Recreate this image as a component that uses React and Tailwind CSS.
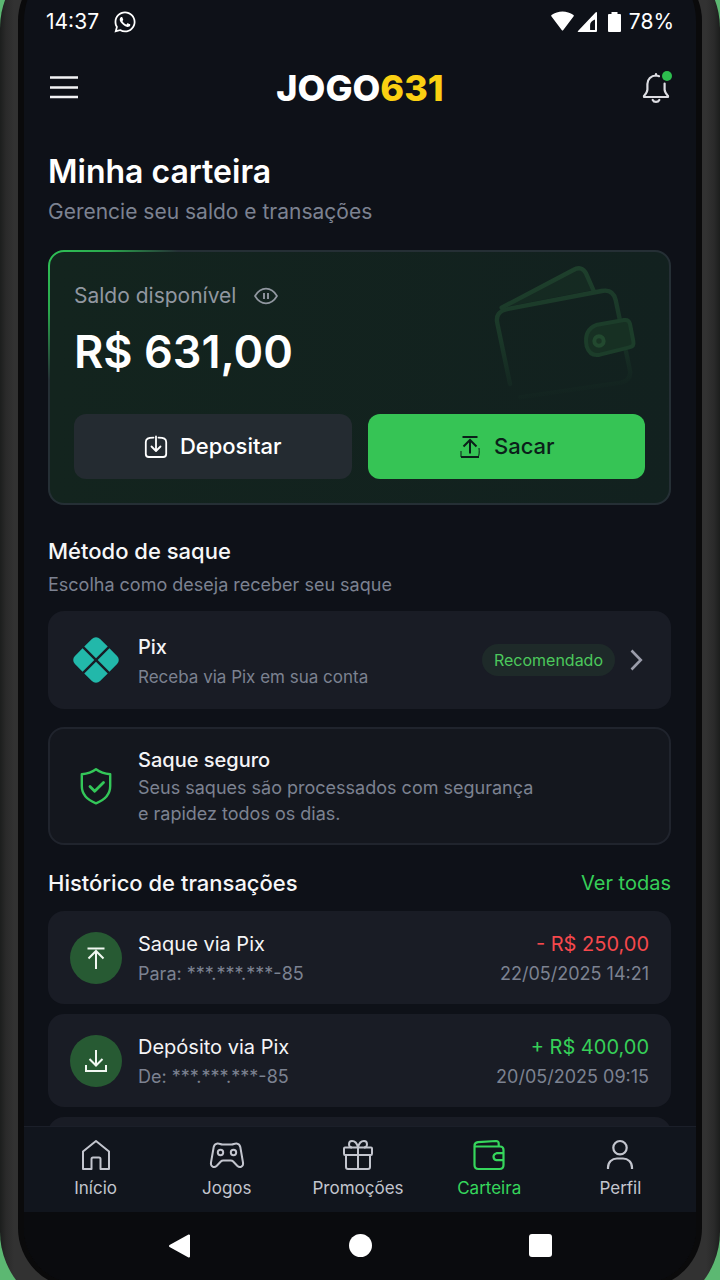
import { useState } from "react"
import { FaWhatsapp } from "react-icons/fa"

const MenuIcon = () => (
  <svg className="w-8 h-8" viewBox="0 0 32 32" fill="none" stroke="currentColor" strokeWidth="2.4">
    <path d="M2 5.500h28M2 15.500h28M2 25h28" />
  </svg>
)

const BellIcon = () => (
  <svg className="w-8 h-8" viewBox="0 0 32 32" fill="none" stroke="currentColor" strokeWidth="2.2" strokeLinecap="round" strokeLinejoin="round">
    <path d="M19 4.200C18 3.700 17 3.500 16 3.500c-5 0-8.600 3.600-8.600 8.500v5.500c0 2.500-1.400 4-3.400 6.500v1h24v-1c-2-2.500-3.400-4-3.400-6.500v-6" />
    <path d="M16 3.500V2M12.700 28c.6 1.200 1.800 1.900 3.300 1.900s2.700-.7 3.300-1.900" />
  </svg>
)

const SignalIcons = () => (
  <svg className="w-[71px] h-6" viewBox="0 0 71 24" fill="currentColor">
    <path d="M1.500 6.500C1 6 1 5.500 1.500 5C8 .3 17 .3 23.500 5c.5.500.5 1 0 1.500L13.300 20c-.5.700-1.100.7-1.600 0Z" />
    <path fillRule="evenodd" d="M47 3v18q0 1-1 1H28.500q-1.500 0-.5-1L45.500 2.500Q47 1.500 47 3ZM45 9.500c-3 1-4.900 3-4.900 5.600v4.900H45Z" />
    <path d="M61.500 2h6v2H70a1 1 0 0 1 1 1v16a1 1 0 0 1-1 1H59a1 1 0 0 1-1-1V5a1 1 0 0 1 1-1h2.500Z" />
  </svg>
)

const EyeIcon = () => (
  <svg className="w-6 h-6" viewBox="0 0 24 24" fill="none" stroke="currentColor" strokeWidth="1.700" strokeLinejoin="round">
    <path d="M1 12C4 7 7.500 4.700 12 4.700S20 7 23 12c-3 5-6.500 7.300-11 7.300S4 17 1 12Z" />
    <path d="M10 9v6M14 9v6" strokeWidth="1.900" />
  </svg>
)

const DepositIcon = () => (
  <svg className="w-6 h-6" viewBox="0 0 24 24" fill="none" stroke="currentColor" strokeWidth="1.800" strokeLinecap="round" strokeLinejoin="round">
    <path d="M9.500 2.600C4 2.800 1.800 3.600 1.800 7v12c0 2 1 3 3 3h14.400c2 0 3-1 3-3V7c0-3.400-2.200-4.200-7.700-4.400" />
    <path d="M12 1.500v14M7.500 11.500l4.500 4.500 4.500-4.500" />
  </svg>
)

const WithdrawIcon = () => (
  <svg className="w-6 h-6" viewBox="0 0 24 24" fill="none" stroke="currentColor" strokeWidth="2">
    <path d="M4.500 2h15M12 18.500V5M5.500 11.500 12 5l6.500 6.500M3 22h18" />
    <path d="M3 16v6M21 13c.4 4 .2 6.500-.6 9" strokeWidth="1" />
  </svg>
)

const PixIcon = () => (
  <svg className="w-[46px] h-[46px]" viewBox="0 0 46 46" fill="#22b8aa">
    <g transform="rotate(45 23 23)">
      <path d="M11 5.200h10.800v16.600H5.200V11a5.800 5.800 0 0 1 5.800-5.800Z" />
      <path d="M24.200 5.200H35a5.800 5.800 0 0 1 5.800 5.800v10.800H24.200Z" />
      <path d="M5.200 24.200h16.600v16.600H11A5.800 5.800 0 0 1 5.200 35Z" />
      <path d="M24.200 24.200h16.600V35a5.800 5.800 0 0 1-5.800 5.800H24.200Z" />
    </g>
  </svg>
)

const ShieldIcon = () => (
  <svg className="w-10 h-10" viewBox="0 0 40 40" fill="none" stroke="#34c759" strokeWidth="2.400" strokeLinecap="round" strokeLinejoin="round">
    <path d="M20 3.200c-4 3-8.500 4.500-14.200 5V20c0 8 5.200 13.800 14.200 17.300C29 33.800 34.200 28 34.200 20V8.200C28.500 7.700 24 6.200 20 3.200Z" />
    <path d="m14 20.500 4.700 4.800 8.800-8.800" strokeWidth="2.800" />
  </svg>
)

const ChevronIcon = () => (
  <svg className="w-6 h-6" viewBox="0 0 24 24" fill="none" stroke="#9a9caa" strokeWidth="2.600">
    <path d="m6.500 2.500 9.300 9.500-9.300 9.500" />
  </svg>
)

const ArrowUpBarIcon = () => (
  <svg className="w-6 h-6" viewBox="0 0 24 24" fill="none" stroke="#f1f8f2" strokeWidth="2">
    <path d="M3.500 2.500h17M12 23V5M4.500 12.500 12 5l7.500 7.500" />
  </svg>
)

const ArrowDownTrayIcon = () => (
  <svg className="w-6 h-6" viewBox="0 0 24 24" fill="none" stroke="#f1f8f2" strokeWidth="2">
    <path d="M12 1v15M5.500 10 12 16.500 18.500 10M2 16v6h20v-6" />
  </svg>
)

const WalletArt = () => (
  <svg className="w-[150px] h-[140px]" viewBox="270 60 450 420" fill="none" strokeLinecap="round" strokeLinejoin="round">
    <defs>
      <linearGradient id="fade" gradientUnits="userSpaceOnUse" x1="470" y1="80" x2="520" y2="470">
        <stop offset="0" stopColor="#1e402c" />
        <stop offset="0.500" stopColor="#1a3728" />
        <stop offset="1" stopColor="#1a3728" stopOpacity="0" />
      </linearGradient>
    </defs>
    <g stroke="url(#fade)" strokeWidth="13">
      <path d="M305 203 520 90q25-14 38 10l22 50" fill="#1e402c" fillOpacity="0.300" />
      <path d="M330 432 292 250q-8-35 32-43L605 153q34-7 42 27l12 57M678 335l12 57q4 28-26 36L360 472" />
    </g>
    <g stroke="#1c3d2a" strokeWidth="12">
      <path d="M592 254 672 240q15-2 18 12l10 52q3 15-12 18l-88 22q-30 6-40-25-10-50 32-65Z" fill="#173023" />
      <circle cx="597" cy="303" r="14" fill="#193424" stroke="#22492f" />
    </g>
  </svg>
)

const HomeIcon = () => (
  <svg className="w-8 h-8" viewBox="0 0 32 32" fill="none" stroke="currentColor" strokeWidth="2" strokeLinejoin="round">
    <path d="M3 12.500 16 2l13 10.500V30h-8.500V20q0-1.500-1.500-1.500h-6q-1.500 0-1.500 1.500v10H3Z" />
  </svg>
)

const GamepadIcon = () => (
  <svg className="w-9 h-8" viewBox="0 0 36 32" fill="none" stroke="currentColor" strokeWidth="2" strokeLinejoin="round">
    <path d="M8.500 4.500q-3 .3-3.800 3.500L2 23.500c-.7 4 3 5.800 5.800 3.200l4-4.200q1-1 2.400-1h7.600q1.400 0 2.400 1l4 4.200c2.800 2.600 6.500.8 5.800-3.200L31.300 8q-.8-3.200-3.800-3.500c-2-.2-3 1-5 1h-9c-2 0-3-1.200-5-1Z" />
    <circle cx="11.500" cy="13.500" r="2.700" />
    <circle cx="24.500" cy="13.500" r="2.700" />
  </svg>
)

const GiftIcon = () => (
  <svg className="w-8 h-8" viewBox="0 0 32 32" fill="none" stroke="currentColor" strokeWidth="2" strokeLinejoin="round">
    <path d="M3 8.500h26q1 0 1 1v5q0 1.500-1 1.500H3q-1 0-1-1.500v-5q0-1 1-1ZM4 16v12q0 2 2 2h20q2 0 2-2V16M16 8.500V30" />
    <path d="M16 8.500C15 4 12.500 2 10 2 6 2 6 8.500 10 8.500M16 8.500C17 4 19.500 2 22 2c4 0 4 6.500 0 6.500" />
  </svg>
)

const WalletIcon = () => (
  <svg className="w-8 h-8" viewBox="0 0 32 32" fill="none" stroke="currentColor" strokeWidth="2.200" strokeLinejoin="round">
    <path d="M1.500 7V26q0 4 4 4h21q4 0 4-4V11q0-3.500-3.500-3.500H3q-1.500 0-1.500-1C1.500 4 3 3.500 5 3.200L23 2q2.700 0 2.700 2.500v3" />
    <path d="M30.500 14.200h-7q-3 .8-3 3.500t3 3.500h7" />
  </svg>
)

const ProfileIcon = () => (
  <svg className="w-8 h-8" viewBox="0 0 32 32" fill="none" stroke="currentColor" strokeWidth="2.200">
    <circle cx="16" cy="8.700" r="6.700" />
    <path d="M4 30v-1.500C4 23 8 19.500 13 19.500h6c5 0 9 3.500 9 9V30" />
  </svg>
)

const navItems = [
  { icon: HomeIcon, label: "Início" },
  { icon: GamepadIcon, label: "Jogos" },
  { icon: GiftIcon, label: "Promoções" },
  { icon: WalletIcon, label: "Carteira" },
  { icon: ProfileIcon, label: "Perfil" },
]

const transactions = [
  {
    id: 1,
    type: "out",
    title: "Saque via Pix",
    detail: "Para: ***.***.***-85",
    amount: "- R$ 250,00",
    date: "22/05/2025 14:21",
  },
  {
    id: 2,
    type: "in",
    title: "Depósito via Pix",
    detail: "De: ***.***.***-85",
    amount: "+ R$ 400,00",
    date: "20/05/2025 09:15",
  },
]

const StatusBar = () => (
  <div className="flex h-11 shrink-0 items-center justify-between px-[22px] text-[21px] text-white">
    <div className="flex items-center gap-[14px]">
      <span>14:37</span>
      <FaWhatsapp className="w-6 h-6" />
    </div>
    <div className="flex items-center gap-2">
      <SignalIcons />
      <span>78%</span>
    </div>
  </div>
)

const Header = () => (
  <header className="flex h-[88px] shrink-0 items-center justify-between px-6">
    <button type="button" aria-label="Menu" className="text-[#f3f3f5]">
      <MenuIcon />
    </button>
    <div className="text-[36px] leading-10 font-extrabold text-white">
      JOGO<span className="text-[#fbd012]">631</span>
    </div>
    <button type="button" aria-label="Notificações" className="relative text-[#dcdde2]">
      <BellIcon />
      <span className="absolute -top-px right-0 h-[10px] w-[10px] rounded-full bg-[#2dbd4e]" />
    </button>
  </header>
)

const BalanceCard = () => (
  <section className="mt-[22px] rounded-2xl bg-[radial-gradient(circle_at_top_left,#2fc257_0,#2aa94d_60px,#252f35_130px)] p-[2px]">
    <div className="relative rounded-[14px] bg-linear-to-r from-[#13241e] to-[#12211f] px-6 pt-7 pb-6">
      <div className="absolute top-2 right-[29px]">
        <WalletArt />
      </div>
      <div className="flex h-8 items-center gap-[18px] text-[21px] text-[#9197a0]">
        <span>Saldo disponível</span>
        <button type="button" aria-label="Ocultar saldo">
          <EyeIcon />
        </button>
      </div>
      <p className="mt-3 text-[45px] leading-[56px] font-semibold text-white">R$ 631,00</p>
      <div className="mt-[34px] grid grid-cols-2 gap-4 text-[22px] font-medium">
        <button type="button" className="flex h-[65px] items-center justify-center gap-3 rounded-xl bg-[#242b31] text-white">
          <DepositIcon />
          Depositar
        </button>
        <button type="button" className="flex h-[65px] items-center justify-center gap-3 rounded-xl bg-[#36c455] text-[#0b1f1a]">
          <WithdrawIcon />
          Sacar
        </button>
      </div>
    </div>
  </section>
)

const TransactionItem = ({ type, title, detail, amount, date }) => (
  <li className="flex h-[93px] shrink-0 items-center gap-4 rounded-2xl bg-[#191c25] px-[22px]">
    <span className="flex h-[52px] w-[52px] items-center justify-center rounded-full bg-[#275a33]">
      {type === "out" ? <ArrowUpBarIcon /> : <ArrowDownTrayIcon />}
    </span>
    <div className="flex-1 pt-[2px]">
      <p className="text-xl leading-[30px] text-[#f4f4f6]">{title}</p>
      <p className="text-lg leading-[30px] text-[#7c8291]">{detail}</p>
    </div>
    <div className="pt-[2px] text-right">
      <p className={`text-xl leading-[30px] ${type === "out" ? "text-[#f5484c]" : "text-[#36cf58]"}`}>
        {amount}
      </p>
      <p className="text-lg leading-[30px] text-[#7c8291]">{date}</p>
    </div>
  </li>
)

const BottomNav = ({ active, onSelect }) => (
  <nav className="grid h-[86px] shrink-0 grid-cols-5 border-t border-[#1b1f29] bg-[#11151d] pl-1.5 pr-2.5">
    {navItems.map(({ icon: Icon, label }) => (
      <button
        key={label}
        type="button"
        onClick={() => onSelect(label)}
        className={`flex flex-col items-center justify-center gap-[5px] text-[17px] leading-6 ${
          active === label ? "text-[#36d65c]" : "text-[#c3c5ce]"
        }`}
      >
        <Icon />
        {label}
      </button>
    ))}
  </nav>
)

const SystemBar = () => (
  <div className="flex h-[71px] shrink-0 items-center justify-around bg-[#0a0b0e] px-[66px] pb-1 text-white">
    <button type="button" aria-label="Voltar">
      <svg className="w-6 h-6" viewBox="0 0 24 24" fill="currentColor" stroke="currentColor" strokeWidth="2" strokeLinejoin="round">
        <path d="M2 12 21 1.500v21Z" />
      </svg>
    </button>
    <button type="button" aria-label="Tela inicial" className="h-[23px] w-[23px] rounded-full bg-white" />
    <button type="button" aria-label="Recentes" className="h-[23px] w-[23px] rounded-[3px] bg-white" />
  </div>
)

export default function App() {
  const [active, setActive] = useState("Carteira")

  return (
    <div className="flex h-screen flex-col overflow-hidden bg-[#5cb872] font-['Inter',sans-serif]">
      {/* Phone body, taller than the window so its ends are cropped */}
      <div className="-mt-[52px] -mb-8 flex min-h-0 flex-1 flex-col rounded-[80px] bg-[linear-gradient(to_right,#1c1e1d_0,#2a2a2a_6px,#323232_14px,#323232_calc(100%-14px),#2a2a2a_calc(100%-6px),#1c1e1d_100%)] px-[18px] pt-[13px] pb-6">
        <div className="flex min-h-0 flex-1 flex-col overflow-hidden rounded-[60px] border-x-[6px] border-b-[5px] border-[#0a0a0b] bg-[#0e1118] pt-[39px]">
          <StatusBar />
          <Header />

          <main className="flex min-h-0 flex-1 flex-col overflow-y-auto pt-5 pr-[25px] pl-6 [scrollbar-width:none]">
            <h1 className="text-[32px] leading-10 font-semibold text-white">Minha carteira</h1>
            <p className="mt-1 text-[21px] leading-8 text-[#7c8291]">Gerencie seu saldo e transações</p>

            <BalanceCard />

            <h2 className="mt-8 text-[22px] leading-7 font-medium text-[#f7f7f8]">Método de saque</h2>
            <p className="mt-2 text-lg leading-6 text-[#7c8291]">Escolha como deseja receber seu saque</p>

            <button type="button" className="mt-[14px] flex h-[98px] shrink-0 items-center gap-4 rounded-2xl bg-[#191c25] px-[22px] text-left">
              <span className="flex w-[52px] justify-center">
                <PixIcon />
              </span>
              <span className="flex-1 pt-1">
                <span className="block text-xl leading-[30px] font-medium text-[#f4f4f6]">Pix</span>
                <span className="block text-[17px] leading-[30px] text-[#7c8291]">Receba via Pix em sua conta</span>
              </span>
              <span className="flex items-center gap-[10px]">
                <span className="rounded-full bg-[#1e2a29] px-3 text-base leading-8 text-[#4cc85c]">Recomendado</span>
                <ChevronIcon />
              </span>
            </button>

            <section className="mt-[18px] flex h-[118px] shrink-0 items-center gap-4 rounded-2xl border-2 border-[#20242d] bg-[#14171e] px-5">
              <span className="flex w-[52px] justify-center">
                <ShieldIcon />
              </span>
              <div>
                <h3 className="text-xl leading-[30px] font-medium text-[#f4f4f6]">Saque seguro</h3>
                <p className="text-lg leading-[26px] text-[#7c8291]">
                  Seus saques são processados com segurança
                  <br />e rapidez todos os dias.
                </p>
              </div>
            </section>

            <div className="mt-6 flex items-center justify-between leading-7">
              <h2 className="text-[22px] font-medium text-[#f7f7f8]">Histórico de transações</h2>
              <a href="#transacoes" className="text-xl text-[#36cf58]">
                Ver todas
              </a>
            </div>

            <ul id="transacoes" className="mt-[14px] flex flex-col gap-[10px]">
              {transactions.map((tx) => (
                <TransactionItem key={tx.id} {...tx} />
              ))}
              <li className="h-[93px] shrink-0 rounded-2xl bg-[#191c25]" />
            </ul>
          </main>

          <BottomNav active={active} onSelect={setActive} />
          <SystemBar />
        </div>
      </div>
    </div>
  )
}
